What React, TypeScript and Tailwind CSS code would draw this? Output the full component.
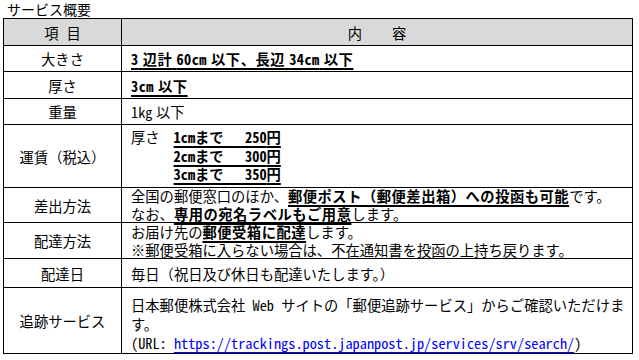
const B = ({ children, wide = true }: { children: React.ReactNode; wide?: boolean }) => (
  <span
    className={`font-bold underline underline-offset-[3px] decoration-[1.5px] ${wide ? 'tracking-[0.5px]' : ''}`}
  >
    {children}
  </span>
);

// half-width latin, like the MS Gothic look of the original
const L = ({ children }: { children: React.ReactNode }) => (
  <span className="[font-feature-settings:'hwid']">{children}</span>
);

// narrow gap between latin and kana, as Word spaces them
const G = '\u2005';

const Row = ({
  label,
  h,
  children,
}: {
  label: string;
  h: string;
  children: React.ReactNode;
}) => (
  <>
    <div className={`${h} flex items-center justify-center border-r border-b border-black`}>{label}</div>
    <div className={`${h} flex items-center pl-[9px] border-r border-b border-black`}>
      <div>{children}</div>
    </div>
  </>
);

export default function App() {
  return (
    <div className="min-h-screen w-[639px] h-[360px] bg-white text-black font-['Noto_Sans_CJK_JP',sans-serif] text-[14.3px] leading-[19px]">
      <div className="h-[18px] pl-[7px] pt-[1px] text-[14px] leading-[16px]">サービス概要</div>

      <div className="ml-[3px] w-[630px] grid grid-cols-[118px_511px] border-l border-t border-black">
        {/* header */}
        <div className="h-[27px] flex items-center justify-center gap-[8px] bg-[#d9d9d9] border-r border-b border-black">
          <span>項</span>
          <span>目</span>
        </div>
        <div className="h-[27px] flex items-center justify-center gap-[30px] bg-[#d9d9d9] border-r border-b border-black">
          <span>内</span>
          <span>容</span>
        </div>

        <Row label="大きさ" h="h-[26px]">
          <B>
            <L>3</L>
            {G}辺計{G}
            <L>60cm</L>
            {G}以下、長辺{G}
            <L>34cm</L>
            {G}以下
          </B>
        </Row>
        <Row label="厚さ" h="h-[27px]">
          <B>
            <L>3cm</L>
            {G}以下
          </B>
        </Row>
        <Row label="重量" h="h-[26px]">
          <L>1kg</L>
          {G}以下
        </Row>
        <Row label="運賃（税込）" h="h-[63px]">
          <div className="flex gap-[14px] leading-[18.5px]">
            <span>厚さ</span>
            <div className="flex flex-col whitespace-pre">
              <B wide={false}>
                <L>1cm</L>まで　<L> 250</L>円
              </B>
              <B wide={false}>
                <L>2cm</L>まで　<L> 300</L>円
              </B>
              <B wide={false}>
                <L>3cm</L>まで　<L> 350</L>円
              </B>
            </div>
          </div>
        </Row>
        <Row label="差出方法" h="h-[35px]">
          <div className="leading-[18px]">
            全国の郵便窓口のほか、<B>郵便ポスト（郵便差出箱）への投函も可能</B>です。
            <br />
            なお、<B>専用の宛名ラベルもご用意</B>します。
          </div>
        </Row>
        <Row label="配達方法" h="h-[36px]">
          <div className="leading-[18px]">
            お届け先の<B>郵便受箱に配達</B>します。
            <br />
            ※郵便受箱に入らない場合は、不在通知書を投函の上持ち戻ります。
          </div>
        </Row>
        <Row label="配達日" h="h-[29px]">
          毎日（祝日及び休日も配達いたします。）
        </Row>
        <Row label="追跡サービス" h="h-[66px]">
          <div className="leading-[19px] pt-[6px]">
            日本郵便株式会社<L> Web </L>サイトの「郵便追跡サービス」からご確認いただけま
            <br />
            す。
            <br />
            <L>
              (URL: <span className="text-[#0000ff] underline underline-offset-[3px]">https://trackings.post.japanpost.jp/services/srv/search/</span>)
            </L>
          </div>
        </Row>
      </div>
    </div>
  );
}
